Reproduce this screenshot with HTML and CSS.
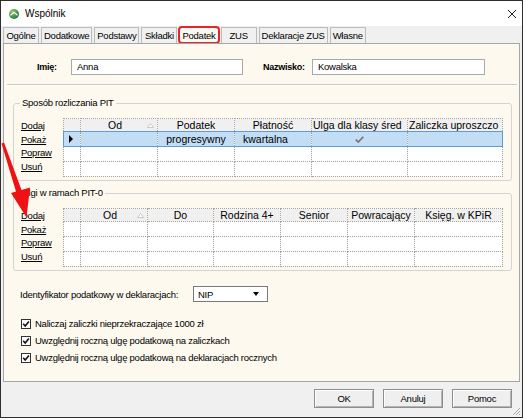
FILE: index.html
```html
<!DOCTYPE html>
<html lang="pl">
<head>
<meta charset="UTF-8">
<title>Wspólnik</title>
<link rel="stylesheet" href="styles.css">
</head>
<body>

<div class="window">
  <div class="titlebar">
    <svg class="app-icon" width="10" height="10" viewBox="0 0 10 10">
      <defs>
        <radialGradient id="g" cx="35%" cy="30%" r="75%">
          <stop offset="0" stop-color="#8fd36a"/>
          <stop offset="1" stop-color="#23713a"/>
        </radialGradient>
      </defs>
      <circle cx="5" cy="5" r="5" fill="url(#g)"/>
      <path d="M1.5 6.2 L5 3.2 L8.5 6.2" fill="none" stroke="#fff" stroke-width="1.2"/>
    </svg>
    <span class="title">Wspólnik</span>
    <svg class="close" width="10" height="10" viewBox="0 0 10 10">
      <path d="M1 1 L9 9 M9 1 L1 9" stroke="#222" stroke-width="1"/>
    </svg>
  </div>

  <div class="tabs">
    <div class="tab">Ogólne</div>
    <div class="tab">Dodatkowe</div>
    <div class="tab">Podstawy</div>
    <div class="tab">Składki</div>
    <div class="tab tab-active">Podatek</div>
    <div class="tab">ZUS</div>
    <div class="tab">Deklaracje ZUS</div>
    <div class="tab">Własne</div>
  </div>

  <div class="panel">
    <div class="names">
      <label class="lbl lbl-imie">Imię:</label>
      <div class="input input-imie">Anna</div>
      <label class="lbl lbl-nazwisko">Nazwisko:</label>
      <div class="input input-nazwisko">Kowalska</div>
    </div>

    <div class="sep"></div>

    <fieldset class="group group-pit">
      <legend>Sposób rozliczania PIT</legend>
      <div class="group-body">
        <div class="links">
          <a>Dodaj</a>
          <a>Pokaż</a>
          <a>Popraw</a>
          <a>Usuń</a>
        </div>
        <table class="grid">
          <colgroup>
            <col class="w17"><col class="w77"><col class="w77"><col class="w77"><col class="w96"><col class="w95">
          </colgroup>
          <tr>
            <th></th>
            <th><svg class="sort" width="7" height="5" viewBox="0 0 7 5"><path d="M0.5 4.5 L3.5 0.5 L6.5 4.5 Z" fill="#fff" stroke="#c8c8c8"/></svg>Od</th>
            <th>Podatek</th>
            <th>Płatność</th>
            <th class="start">Ulga dla klasy śred</th>
            <th class="start">Zaliczka uproszczo</th>
          </tr>
          <tr class="sel">
            <td><span class="pointer"></span></td>
            <td></td>
            <td class="center">progresywny</td>
            <td class="left">kwartalna</td>
            <td class="center"><svg width="9" height="7" viewBox="0 0 9 7"><path d="M0.8 3.6 L3.3 6 L8.3 0.8" fill="none" stroke="#707070" stroke-width="1.6"/></svg></td>
            <td></td>
          </tr>
          <tr><td></td><td></td><td></td><td></td><td></td><td></td></tr>
          <tr><td></td><td></td><td></td><td></td><td></td><td></td></tr>
        </table>
      </div>
    </fieldset>

    <fieldset class="group group-ulgi">
      <legend>Ulgi w ramach PIT-0</legend>
      <div class="group-body">
        <div class="links">
          <a>Dodaj</a>
          <a>Pokaż</a>
          <a>Popraw</a>
          <a>Usuń</a>
        </div>
        <table class="grid">
          <colgroup>
            <col class="w17"><col class="w67"><col class="w66"><col class="w67"><col class="w67"><col class="w67"><col class="w88">
          </colgroup>
          <tr>
            <th></th>
            <th><svg class="sort" width="7" height="5" viewBox="0 0 7 5"><path d="M0.5 4.5 L3.5 0.5 L6.5 4.5 Z" fill="#fff" stroke="#c8c8c8"/></svg>Od</th>
            <th>Do</th>
            <th>Rodzina 4+</th>
            <th>Senior</th>
            <th>Powracający</th>
            <th>Księg. w KPiR</th>
          </tr>
          <tr><td></td><td></td><td></td><td></td><td></td><td></td><td></td></tr>
          <tr><td></td><td></td><td></td><td></td><td></td><td></td><td></td></tr>
          <tr><td></td><td></td><td></td><td></td><td></td><td></td><td></td></tr>
        </table>
      </div>
    </fieldset>

    <div class="ident">
      <span class="ident-label">Identyfikator podatkowy w deklaracjach:</span>
      <div class="select">NIP<span class="caret"></span></div>
    </div>

    <div class="checks">
      <div class="check">
        <svg width="10" height="10" viewBox="0 0 10 10"><rect x="0.5" y="0.5" width="9" height="9" fill="#fff" stroke="#333"/><path d="M2.2 4.8 L4.2 7 L7.9 2.6" fill="none" stroke="#111" stroke-width="1.6"/></svg>
        <span>Naliczaj zaliczki nieprzekraczające 1000 zł</span>
      </div>
      <div class="check">
        <svg width="10" height="10" viewBox="0 0 10 10"><rect x="0.5" y="0.5" width="9" height="9" fill="#fff" stroke="#333"/><path d="M2.2 4.8 L4.2 7 L7.9 2.6" fill="none" stroke="#111" stroke-width="1.6"/></svg>
        <span>Uwzględnij roczną ulgę podatkową na zaliczkach</span>
      </div>
      <div class="check">
        <svg width="10" height="10" viewBox="0 0 10 10"><rect x="0.5" y="0.5" width="9" height="9" fill="#fff" stroke="#333"/><path d="M2.2 4.8 L4.2 7 L7.9 2.6" fill="none" stroke="#111" stroke-width="1.6"/></svg>
        <span>Uwzględnij roczną ulgę podatkową na deklaracjach rocznych</span>
      </div>
    </div>
  </div>

  <div class="footer">
    <button class="btn">OK</button>
    <button class="btn">Anuluj</button>
    <button class="btn">Pomoc</button>
    <svg class="grip" width="10" height="10" viewBox="0 0 10 10">
      <path d="M9 2 L2 9 M9 5 L5 9 M9 8 L8 9" stroke="#a8a8a8" stroke-width="1"/>
    </svg>
  </div>

  <!-- strzałka -->
  <svg class="arrow" width="40" height="230" viewBox="0 0 40 230">
    <polygon points="1.5,143.5 4,142.5 21.5,190 30,187.5 26.5,217.5 11,193 16,191.5" fill="#f01212"/>
  </svg>
</div>

</body>
</html>
```

FILE: styles.css
```css
body {
  margin: 0;
  font-family: "Liberation Sans", Arial, sans-serif;
  background: #fff;
  color: #000;
}

.window {
  position: relative;
  width: 521px;
  height: 416px;
  border: 1px solid #2e2e2e;
  background: #f0f0f0;
  display: flex;
  flex-direction: column;
}

.titlebar {
  height: 25px;
  flex: 0 0 25px;
  background: #fff;
  display: flex;
  align-items: center;
  padding-left: 8px;
}

.title {
  margin-left: 6px;
  font-size: 10px;
}

.close {
  margin-left: auto;
  margin-right: 5px;
}

/* zakładki */
.tabs {
  height: 17px;
  flex: 0 0 17px;
  display: flex;
  align-items: flex-end;
  gap: 2px;
  padding-left: 2px;
}

.tab {
  height: 15px;
  line-height: 15px;
  min-width: 30px;
  padding: 0 2px;
  text-align: center;
  border: 1px solid #bcbcbc;
  border-bottom: none;
  background: #f0f0f0;
  font-size: 9.5px;
  letter-spacing: -0.25px;
}

.tab-active {
  background: #fbf8f1;
  outline: 2px solid #e3262b;
  outline-offset: -1px;
  border-radius: 3px;
}

.panel {
  flex: 1;
  margin: 0 2px;
  border: 1px solid #a6a6a6;
  background: #fdf9ef;
  font-size: 9.5px;
  letter-spacing: -0.25px;
}

.names {
  display: flex;
  align-items: center;
  padding: 15px 0 0 33px;
}

.lbl {
  font-weight: bold;
  font-size: 9px;
}

.lbl-imie {
  flex: 0 0 34px;
}

.lbl-nazwisko {
  flex: 0 0 49px;
  margin-left: 20px;
}

.input {
  height: 16px;
  line-height: 14px;
  box-sizing: border-box;
  border: 1px solid #a9a9a9;
  background: #fff;
  padding-left: 5px;
}

.input-imie {
  width: 172px;
}

.input-nazwisko {
  width: 173px;
}

.sep {
  margin: 9px 2px 0 3px;
  border-top: 1px solid #c9c9c9;
  border-bottom: 1px solid #fff;
}

/* grupy */
.group {
  margin: 11px 7px 0 9px;
  padding: 0 7px 3px 7px;
  border: 1px solid #d3d3d3;
  border-radius: 3px;
  min-width: 0;
}

.group legend {
  padding: 0 2px;
  margin-left: -1px;
  line-height: 12px;
}

.group-ulgi {
  margin-top: 6px;
  padding-bottom: 3px;
}

.group-body {
  display: flex;
  margin-top: 9px;
}

.links {
  width: 42px;
  padding-top: 1px;
}

.links a {
  display: block;
  line-height: 13.6px;
  text-decoration: underline;
}

.grid {
  width: 439px;
  table-layout: fixed;
  border-collapse: collapse;
  border: 1px dotted #9a9a9a;
  font-size: 10.5px;
  letter-spacing: 0;
}

.w17 { width: 17px; }
.w66 { width: 66px; }
.w67 { width: 67px; }
.w77 { width: 77px; }
.w88 { width: 88px; }
.w95 { width: 95px; }
.w96 { width: 96px; }

.grid th,
.grid td {
  border: 1px dotted #a3a3a3;
  padding: 0 2px;
  white-space: nowrap;
  overflow: hidden;
}

.grid th {
  height: 12px;
  line-height: 12px;
  font-weight: normal;
  background: #f0f0f0;
  text-align: center;
}

.grid th.start {
  text-align: left;
  padding-left: 1px;
}

.grid td {
  height: 14px;
  line-height: 14px;
  background: #fff;
}

.sort {
  float: right;
  margin: 4px 1px 0 0;
}

.grid tr.sel td {
  background: #c2ddf4;
  border-top: 1px solid #5c9dd6;
  border-bottom: 1px solid #5c9dd6;
}

.grid tr.sel td:first-child {
  border-left: 1px solid #5c9dd6;
}

.grid tr.sel td:last-child {
  border-right: 1px solid #5c9dd6;
}

.center {
  text-align: center;
}

.grid td.left {
  padding-left: 8px;
}

.pointer {
  display: inline-block;
  margin: 3px 0 0 3px;
  border-left: 4px solid #000;
  border-top: 4px solid transparent;
  border-bottom: 4px solid transparent;
  vertical-align: top;
}

/* identyfikator i opcje */
.ident {
  display: flex;
  align-items: center;
  margin-top: 15px;
  padding-left: 16px;
}

.ident-label {
  flex: 0 0 173px;
}

.select {
  display: flex;
  align-items: center;
  width: 75px;
  height: 16px;
  box-sizing: border-box;
  border: 1px solid #7a7a7a;
  background: #fff;
  padding-left: 4px;
}

.caret {
  margin: 0 8px 0 auto;
  border-top: 4px solid #000;
  border-left: 3.5px solid transparent;
  border-right: 3.5px solid transparent;
}

.checks {
  display: flex;
  flex-direction: column;
  gap: 4px;
  margin-top: 15px;
  padding-left: 17px;
}

.check {
  display: flex;
  align-items: center;
  gap: 4px;
  height: 13px;
}

/* dół okna */
.footer {
  position: relative;
  height: 35px;
  flex: 0 0 35px;
  box-sizing: border-box;
  display: flex;
  justify-content: flex-end;
  align-items: flex-start;
  gap: 9px;
  padding: 7px 10px 0 0;
}

.btn {
  width: 60px;
  height: 19px;
  padding: 0;
  border: 1px solid #8e8e8e;
  background: #efefef;
  box-shadow: inset 1px 1px #fff, inset -1px -1px #b4b4b4;
  font-family: "Liberation Sans", Arial, sans-serif;
  font-size: 9.5px;
  letter-spacing: -0.25px;
  color: #000;
}

.grip {
  position: absolute;
  right: 1px;
  bottom: 1px;
}

.arrow {
  position: absolute;
  left: -1px;
  top: -1px;
}
```
